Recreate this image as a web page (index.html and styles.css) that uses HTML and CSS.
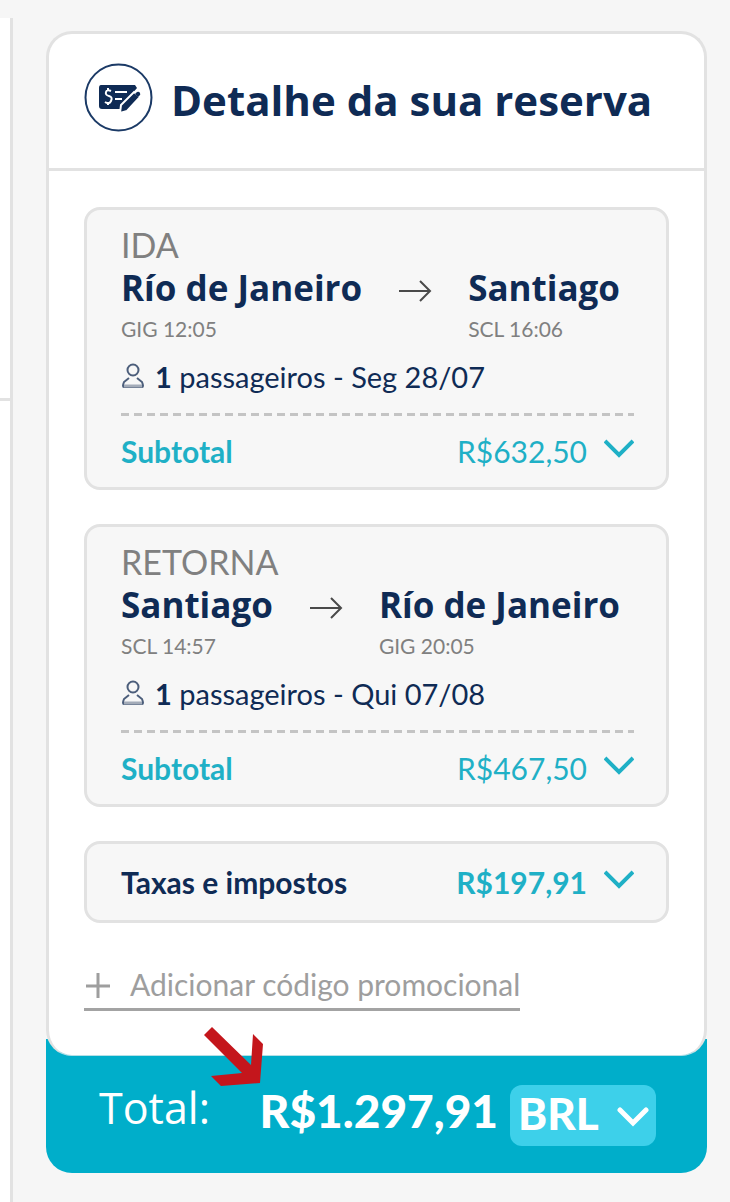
FILE: index.html
```html
<!DOCTYPE html>
<html lang="pt-BR">
<head>
<meta charset="utf-8">
<meta name="viewport" content="width=device-width, initial-scale=1">
<title>Detalhe da sua reserva</title>
<link rel="stylesheet" href="styles.css">
</head>
<body>
<div class="page">
  <div class="side-panel"><div class="side-top"></div></div>
  <main class="summary">
    <section class="card">
      <header class="card-header">
        <svg class="header-icon" viewBox="0 0 69 69" aria-hidden="true">
          <circle cx="34.5" cy="34.5" r="33" fill="none" stroke="#1b3a66" stroke-width="2"/>
          <path d="M17 22h34l2 3-13 15-3 6H18q-3 0-3-3V25q0-3 2-3z" fill="#0f2b55"/>
          <path d="M27 28q-4-2-5 1t3 4 2 5-6 1M24 25v3M24 39v3M31 29h12M31 36h7" fill="none" stroke="#fff" stroke-width="2"/>
          <path d="M36 50l1-8 13-13 6 5-13 14z" fill="#0f2b55" stroke="#fff" stroke-width="2"/>
          <path d="M51 31l2-2q2-1 3 1t-1 3l-1 1z" fill="#0f2b55"/>
        </svg>
        <h1 class="title">Detalhe da sua reserva</h1>
      </header>
      <div class="card-body">
        <article class="box">
          <h2 class="direction">IDA</h2>
          <div class="route">
            <div><div class="city">Río de Janeiro</div><div class="time">GIG 12:05</div></div>
            <svg class="arrow" viewBox="0 0 34 24" aria-hidden="true"><path d="M1 12h31M22 2l10 10-10 10"/></svg>
            <div><div class="city">Santiago</div><div class="time">SCL 16:06</div></div>
          </div>
          <p class="passengers">
            <svg class="person" viewBox="0 0 24 28" aria-hidden="true"><circle cx="12" cy="7" r="5.5"/><path d="M8 15l-5 4q-2 5 0 5h18q2 0 0-5l-5-4"/><path d="M3 23h18" stroke="#a3abb8" stroke-width="3"/></svg>
            <span><b>1</b> passageiros - Seg 28/07</span>
          </p>
          <div class="line subtotal">
            <span class="label">Subtotal</span>
            <button class="toggle" type="button">R$632,50<svg class="chevron" viewBox="0 0 30 20" aria-hidden="true"><path d="M1 2l14 14L29 2"/></svg></button>
          </div>
        </article>
        <article class="box">
          <h2 class="direction">RETORNA</h2>
          <div class="route">
            <div><div class="city">Santiago</div><div class="time">SCL 14:57</div></div>
            <svg class="arrow" viewBox="0 0 34 24" aria-hidden="true"><path d="M1 12h31M22 2l10 10-10 10"/></svg>
            <div><div class="city">Río de Janeiro</div><div class="time">GIG 20:05</div></div>
          </div>
          <p class="passengers">
            <svg class="person" viewBox="0 0 24 28" aria-hidden="true"><circle cx="12" cy="7" r="5.5"/><path d="M8 15l-5 4q-2 5 0 5h18q2 0 0-5l-5-4"/><path d="M3 23h18" stroke="#a3abb8" stroke-width="3"/></svg>
            <span><b>1</b> passageiros - Qui 07/08</span>
          </p>
          <div class="line subtotal">
            <span class="label">Subtotal</span>
            <button class="toggle" type="button">R$467,50<svg class="chevron" viewBox="0 0 30 20" aria-hidden="true"><path d="M1 2l14 14L29 2"/></svg></button>
          </div>
        </article>
        <div class="box box-taxes">
          <div class="line">
            <span class="label label-dark">Taxas e impostos</span>
            <button class="toggle toggle-bold" type="button">R$197,91<svg class="chevron" viewBox="0 0 30 20" aria-hidden="true"><path d="M1 2l14 14L29 2"/></svg></button>
          </div>
        </div>
        <a class="promo" href="#promo">
          <svg class="plus" viewBox="0 0 28 28" aria-hidden="true"><path d="M14 3v25M2 16h24"/></svg>
          Adicionar código promocional
        </a>
      </div>
    </section>
    <footer class="total">
      <span class="total-label">Total:</span>
      <strong class="amount">R$1.297,91</strong>
      <div class="currency">
        <select class="currency-select" aria-label="Moeda"><option>BRL</option></select>
        <svg class="currency-chevron" viewBox="0 0 32 20" aria-hidden="true"><path d="M3 3l13 13L29 3"/></svg>
      </div>
      <svg class="pointer" viewBox="0 0 60 60" aria-hidden="true"><path d="M8 0L0 8l38 38-31 3 10 10 39-3 3-39-10-10-2 31z"/></svg>
    </footer>
  </main>
</div>
</body>
</html>
```
FILE: styles.css
```css
* { box-sizing: border-box; }

body {
  margin: 0;
  background: #f6f6f6;
  color: #0f2b55;
  font-family: Lato, "Open Sans", sans-serif;
}

h1, h2, p { margin: 0; }

.page {
  display: grid;
  grid-template-columns: 13px 1fr;
  min-height: 100vh;
}

.side-panel {
  margin-top: 18px;
  background: #fff;
  border-right: 3px solid #e2e2e2;
}

.side-top {
  height: 383px;
  border-bottom: 3px solid #e2e2e2;
}

.summary { padding: 31px 23px 28px 33px; }

.card {
  position: relative;
  z-index: 1;
  background: #fff;
  border: 3px solid #e2e2e2;
  border-bottom: 1px solid #b5dfe6;
  border-radius: 26px;
}

.card-header {
  display: flex;
  align-items: center;
  gap: 18px;
  padding: 29px 35px 36px;
  border-bottom: 3px solid #e2e2e2;
}

.header-icon { width: 69px; height: 69px; flex: none; }

.title {
  padding-top: 5px;
  font-family: "Open Sans", "Noto Sans", sans-serif;
  font-size: 42px;
  line-height: 52px;
  font-weight: 700;
  white-space: nowrap;
}

.card-body {
  display: flex;
  flex-direction: column;
  gap: 34px;
  padding: 36px 35px 44px;
}

.box {
  padding: 14px 32px 18px 34px;
  background: #f7f7f7;
  border: 3px solid #e2e2e2;
  border-radius: 16px;
}

.box-taxes { padding-top: 20px; padding-bottom: 20px; }

.direction {
  font-size: 34px;
  line-height: 42px;
  font-weight: 400;
  color: #808080;
}

.route { display: flex; gap: 36px; }

.city {
  font-family: "Open Sans", "Noto Sans", sans-serif;
  font-size: 35px;
  line-height: 44px;
  font-weight: 700;
  white-space: nowrap;
}

.time {
  font-size: 21px;
  line-height: 38px;
  color: #808080;
}

.arrow {
  width: 34px;
  height: 24px;
  margin-top: 13px;
  flex: none;
  fill: none;
  stroke: #4a4a4a;
  stroke-width: 2;
}

.passengers {
  display: flex;
  align-items: center;
  gap: 10px;
  margin-top: 11px;
  font-size: 29px;
  line-height: 36px;
}

.person {
  width: 24px;
  height: 28px;
  fill: none;
  stroke: #4c5e7b;
  stroke-width: 2;
}

.line {
  display: flex;
  justify-content: space-between;
  font-size: 30px;
  line-height: 36px;
}

.subtotal {
  margin-top: 18px;
  padding-top: 20px;
  background: repeating-linear-gradient(90deg, #c4c4c4 0 8px, transparent 8px 13px) top / 100% 3px no-repeat;
}

.label { font-weight: 700; color: #1fb0c6; }
.label-dark { color: #0f2b55; }

.toggle {
  display: flex;
  gap: 17px;
  padding: 0;
  border: 0;
  background: none;
  color: #1fb0c6;
  font: inherit;
  cursor: pointer;
}

.toggle-bold { font-weight: 700; }

.chevron {
  width: 30px;
  height: 20px;
  margin-top: 6px;
  fill: none;
  stroke: #1fb0c6;
  stroke-width: 4;
}

.promo {
  display: flex;
  align-items: center;
  align-self: flex-start;
  gap: 18px;
  margin-top: 9px;
  padding-bottom: 6px;
  border-bottom: 3px solid #a3a3a3;
  color: #9e9e9e;
  font-size: 30px;
  line-height: 36px;
  text-decoration: none;
}

.plus {
  width: 28px;
  height: 28px;
  fill: none;
  stroke: #9e9e9e;
  stroke-width: 3;
}

.total {
  position: relative;
  display: flex;
  align-items: flex-start;
  margin-top: -17px;
  padding: 46px 51px 27px 53px;
  background: #00aeca;
  border-radius: 0 0 26px 26px;
  color: #fff;
}

.total-label {
  font-family: "Open Sans", "Noto Sans", sans-serif;
  font-size: 43px;
  line-height: 46px;
  font-weight: 500;
}

.amount {
  margin-left: auto;
  font-size: 46px;
  line-height: 52px;
  font-weight: 900;
}

.currency { position: relative; margin-left: 12px; }

.currency-select {
  width: 146px;
  height: 61px;
  padding: 0 50px 6px 8px;
  appearance: none;
  border: 0;
  border-radius: 12px;
  background: #3dd0ea;
  color: #fff;
  font: 900 44px Lato, sans-serif;
}

.currency-chevron {
  position: absolute;
  top: 22px;
  right: 7px;
  width: 32px;
  height: 20px;
  fill: none;
  stroke: #fff;
  stroke-width: 5;
  stroke-linecap: round;
  pointer-events: none;
}

.pointer {
  position: absolute;
  z-index: 2;
  top: -12px;
  left: 158px;
  width: 60px;
  height: 60px;
  fill: #c4161c;
}
```
